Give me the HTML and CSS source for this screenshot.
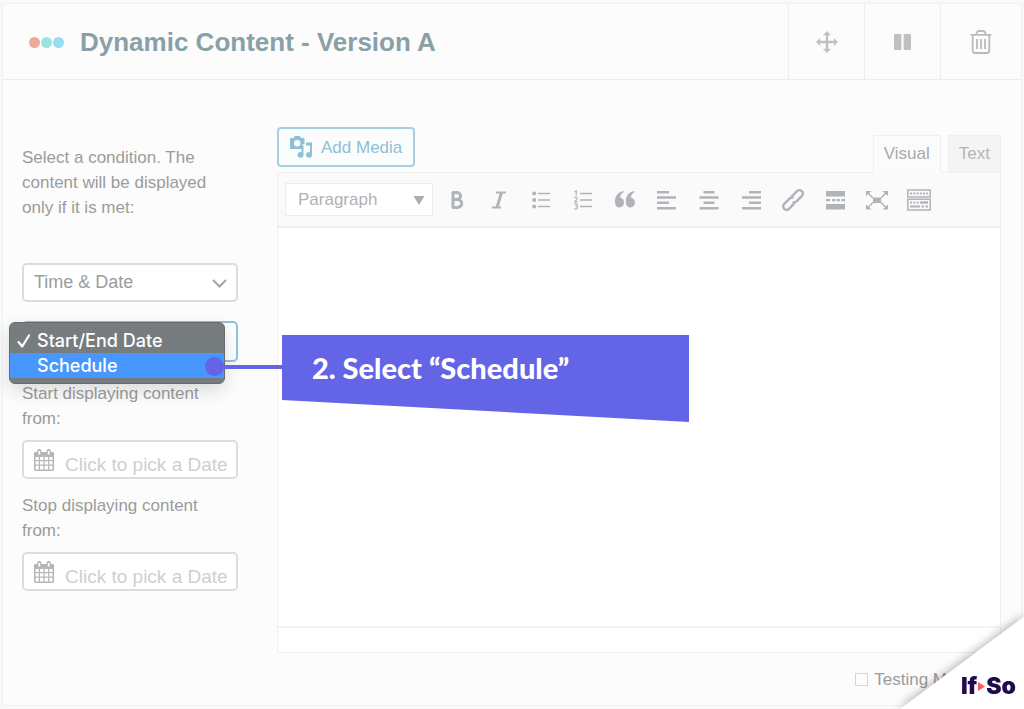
FILE: index.html
```html
<!DOCTYPE html>
<html lang="en">
<head>
<meta charset="utf-8">
<meta name="viewport" content="width=device-width, initial-scale=1">
<title>Dynamic Content - Version A</title>
<link rel="stylesheet" href="styles.css">
</head>
<body>
<main class="card">
  <header class="card-header">
    <span class="dots"><i class="dot dot-red"></i><i class="dot dot-teal"></i><i class="dot dot-blue"></i></span>
    <h1 class="title">Dynamic Content - Version A</h1>
    <div class="actions">
      <button class="action" type="button" aria-label="Move">
        <svg width="22" height="22" viewBox="0 0 22 22" fill="currentColor"><path d="M11 0l4 4.200h-2.800v5.600h5.600V7L22 11l-4.200 4v-2.800h-5.600v5.600H15L11 22l-4-4.200h2.800v-5.600H4.200V15L0 11l4.200-4v2.800h5.600V4.200H7z"/></svg>
      </button>
      <button class="action" type="button" aria-label="Pause">
        <svg width="17" height="16" viewBox="0 0 17 16" fill="currentColor"><rect width="7.400" height="16" rx="1"/><rect x="9.600" width="7.400" height="16" rx="1"/></svg>
      </button>
      <button class="action action-last" type="button" aria-label="Delete">
        <svg width="22" height="24" viewBox="0 0 22 24" fill="none" stroke="currentColor" stroke-width="1.800"><path d="M0.500 4.900h21M6.500 4.500c0-2.500 1-3.500 2.500-3.500h4c1.500 0 2.500 1 2.500 3.500M2.700 5v15.500c0 1.700.8 2.500 2.300 2.500h12c1.500 0 2.300-.8 2.300-2.500V5M7 9v10M11 9v10M15 9v10"/></svg>
      </button>
    </div>
  </header>

  <div class="card-body">
    <section class="conditions">
      <label class="text" for="condition">Select a condition. The content will be displayed only if it is met:</label>
      <div class="select-wrap condition-select">
        <select class="field" id="condition"><option>Time &amp; Date</option></select>
        <svg class="chevron" width="15" height="9" viewBox="0 0 15 9" fill="none" stroke="currentColor" stroke-width="2"><path d="M1 1l6.500 6.500L14 1"/></svg>
      </div>
      <div class="select-wrap type-select">
        <select class="field field-focus" aria-label="Time type"><option>Start/End Date</option></select>
        <div class="popup" role="listbox" aria-label="Time type options">
          <button class="option" type="button" role="option" aria-selected="true">
            <svg class="check" width="14" height="14" viewBox="0 0 14 14" fill="none" stroke="currentColor" stroke-width="2.200" stroke-linecap="round" stroke-linejoin="round"><path d="M1.500 8l3.700 4.500L12 1.500"/></svg>
            <span>Start/End Date</span>
          </button>
          <button class="option option-active" type="button" role="option" aria-selected="false">
            <span class="check"></span>
            <span>Schedule</span>
          </button>
        </div>
        <div class="annotation">
          <span class="pointer-dot"></span>
          <span class="pointer-line"></span>
          <p class="callout">2. Select “Schedule”</p>
        </div>
      </div>
      <label class="text" for="start">Start displaying content from:</label>
      <div class="date-field">
        <svg class="calendar" width="20" height="22" viewBox="0 0 20 22"><path fill="currentColor" fill-rule="evenodd" d="M1.500 3H3V2.300C3 1 3.800 0 5.300 0s2.300 1 2.300 2.300V3h4.800v-.7c0-1.300.8-2.300 2.300-2.300S17 1 17 2.300V3h1.500c.9 0 1.500.6 1.500 1.500v16c0 .9-.6 1.500-1.500 1.500h-17C.6 22 0 21.400 0 20.500v-16C0 3.600.6 3 1.500 3zM4.400 2v3.500h1.800V2zM13.800 2v3.500h1.800V2zM1.500 8v3h3.300V8zm4.500 0v3h3.500V8zm4.700 0v3h3.400V8zm4.600 0v3h3.200V8zM1.500 12.200v3.400h3.300v-3.400zm4.500 0v3.400h3.500v-3.400zm4.700 0v3.400h3.400v-3.400zm4.600 0v3.400h3.200v-3.400zM1.500 16.800v3.700h3.300v-3.700zm4.500 0v3.700h3.500v-3.700zm4.700 0v3.700h3.400v-3.700zm4.600 0v3.700h3.200v-3.700z"/></svg>
        <input class="date-input" id="start" type="text" placeholder="Click to pick a Date">
      </div>
      <label class="text text-stop" for="stop">Stop displaying content from:</label>
      <div class="date-field">
        <svg class="calendar" width="20" height="22" viewBox="0 0 20 22"><path fill="currentColor" fill-rule="evenodd" d="M1.500 3H3V2.300C3 1 3.800 0 5.300 0s2.300 1 2.300 2.300V3h4.800v-.7c0-1.300.8-2.300 2.300-2.300S17 1 17 2.300V3h1.500c.9 0 1.500.6 1.500 1.500v16c0 .9-.6 1.500-1.500 1.500h-17C.6 22 0 21.400 0 20.500v-16C0 3.600.6 3 1.500 3zM4.400 2v3.500h1.800V2zM13.800 2v3.500h1.800V2zM1.500 8v3h3.300V8zm4.500 0v3h3.500V8zm4.700 0v3h3.400V8zm4.600 0v3h3.200V8zM1.500 12.200v3.400h3.300v-3.400zm4.500 0v3.400h3.500v-3.400zm4.700 0v3.400h3.400v-3.400zm4.600 0v3.400h3.200v-3.400zM1.500 16.800v3.700h3.300v-3.700zm4.500 0v3.700h3.500v-3.700zm4.700 0v3.700h3.400v-3.700zm4.600 0v3.700h3.200v-3.700z"/></svg>
        <input class="date-input" id="stop" type="text" placeholder="Click to pick a Date">
      </div>
    </section>

    <section class="editor-column">
      <div class="editor-top">
        <button class="add-media" type="button">
          <svg width="22" height="22" viewBox="0 0 22 22" fill="currentColor"><path fill-rule="evenodd" d="M1 2h2.500L4.800 0h4.900L11 2h2.500c.6 0 1 .4 1 1v5.500H12V13H1c-.6 0-1-.4-1-1V3c0-.6.400-1 1-1zM7.200 4a3.200 3.200 0 100 6.400 3.200 3.200 0 000-6.400z"/><path d="M16 6.500h6V19a3 2.800 0 11-2-2.700V9.500h-4zM11.500 9.500h2V19a3 2.800 0 11-2-2.700z"/></svg>
          Add Media
        </button>
        <div class="tabs">
          <button class="tab tab-active" type="button">Visual</button>
          <button class="tab" type="button">Text</button>
        </div>
      </div>
      <div class="editor">
        <div class="toolbar">
          <div class="select-wrap format-wrap">
            <select class="format" aria-label="Format"><option>Paragraph</option></select>
            <svg class="caret" width="12" height="9" viewBox="0 0 12 9" fill="currentColor"><path d="M0.500 0h11L6 9z"/></svg>
          </div>
          <button class="tool" type="button" aria-label="Bold"><svg width="14" height="18" viewBox="0 0 14 18" fill="none" stroke="currentColor" stroke-width="3"><path d="M2.300 1.600h4.200c5.400 0 5.400 6.800 0 6.800H3h4.200c6 0 6 8 0 8H2.300M3 1v16"/></svg></button>
          <button class="tool" type="button" aria-label="Italic"><svg width="16" height="18" viewBox="0 0 16 18" fill="none" stroke="currentColor"><path stroke-width="2" d="M5 1.500h10M1 16.500h9"/><path stroke-width="3" d="M10.500 1.500L6 16.500"/></svg></button>
          <button class="tool" type="button" aria-label="Bulleted list"><svg width="18" height="18" viewBox="0 0 18 18" fill="currentColor"><circle cx="2.200" cy="2.500" r="2"/><circle cx="2.200" cy="9" r="2"/><circle cx="2.200" cy="15.500" r="2"/><path d="M6 1.700h12v1.600H6zM6 8.200h12v1.600H6zM6 14.700h12v1.600H6z"/></svg></button>
          <button class="tool" type="button" aria-label="Numbered list"><svg width="18" height="20" viewBox="0 0 18 20" fill="none" stroke="currentColor"><path stroke-width="1.600" d="M6 3.500h12M6 10h12M6 16.500h12"/><path stroke-width="1.200" d="M.5 2L2.200.800V5.500M.500 8c.5-1.300 3-1 2.700.5C3 9.700 1.500 10.700.7 11.900h3M.5 14.300c.8-.6 2.800-.6 2.800.6 0 .9-.9 1.300-1.800 1.300.9 0 2 .3 2 1.500 0 1.500-2 1.700-3.200.9"/></svg></button>
          <button class="tool" type="button" aria-label="Blockquote"><svg width="20" height="17" viewBox="0 0 20 17" fill="currentColor"><path d="M8.700 0v1.300C6 2.700 5.200 4.500 5.300 6.800c2.400.2 3.700 2.300 3.700 4.700A4.500 5 0 014.500 16.500C1.500 16.500 0 14 0 10.500 0 4.800 3 .8 8.700 0zM19.400 0v1.300C16.800 2.700 16 4.500 16.100 6.800c2.400.2 3.900 2.300 3.900 4.700a4.500 5 0 01-4.600 5c-3 0-4.600-2.500-4.600-6C10.800 4.800 13.700.8 19.400 0z"/></svg></button>
          <button class="tool" type="button" aria-label="Align left"><svg width="20" height="20" viewBox="0 0 20 20" fill="currentColor"><path d="M0 1h12v2.500H0zM0 6.300h19v2.500H0zM0 11.600h12v2.500H0zM0 16.900h19v2.500H0z"/></svg></button>
          <button class="tool" type="button" aria-label="Align center"><svg width="20" height="20" viewBox="0 0 20 20" fill="currentColor"><path d="M4.500 1h11v2.500h-11zM.5 6.300h19v2.500H.5zM4.500 11.600h11v2.500h-11zM.5 16.900h19v2.500H.5z"/></svg></button>
          <button class="tool" type="button" aria-label="Align right"><svg width="20" height="20" viewBox="0 0 20 20" fill="currentColor"><path d="M8 1h12v2.500H8zM1 6.300h19v2.500H1zM8 11.600h12v2.500H8zM1 16.900h19v2.500H1z"/></svg></button>
          <button class="tool" type="button" aria-label="Link"><svg width="22" height="22" viewBox="0 0 22 22" fill="none" stroke="currentColor"><g transform="rotate(-45 11 11)" stroke-width="2.500"><path d="M9.500 14.400H2a3.400 3.400 0 010-6.800h7.500c1.600 0 2.800 1 3.200 2.300M12.500 7.600H20a3.400 3.400 0 010 6.800h-7.500c-1.600 0-2.800-1-3.200-2.300"/></g></svg></button>
          <button class="tool" type="button" aria-label="Read more"><svg width="19" height="20" viewBox="0 0 19 20" fill="currentColor"><path d="M0 1h19v5.500H0zM0 9h4v2.200H0zM6 9h3.300v2.200H6zM10.500 9h3.300v2.200h-3.300zM15.300 9H19v2.200h-3.700zM0 14h19v5.500H0z"/></svg></button>
          <button class="tool" type="button" aria-label="Fullscreen"><svg width="22" height="20" viewBox="0 0 22 20" fill="currentColor"><path d="M7 7.500h8v5.500H7zM0 1h5.500L0 6zM22 1h-5.500L22 6zM0 19.500h5.500L0 14.500zM22 19.500h-5.500l5.500-5z"/><path fill="none" stroke="currentColor" stroke-width="1.500" d="M1 2l6 6M21 2l-6 6M1 18.500l6-6M21 18.500l-6-6"/></svg></button>
          <button class="tool" type="button" aria-label="Toolbar toggle"><svg width="24" height="22" viewBox="0 0 24 22" fill="none" stroke="currentColor"><path stroke-width="1.500" d="M.8 1h22.400v7H.8zM.8 10.300h22.400V21H.8z"/><path stroke-width="2" stroke-dasharray="2 1.300" d="M3 4.500h18M3 13.600h18"/><path stroke-width="2" d="M3 17.600h10M14.500 17.600h2.500M18.500 17.600H21M14 13.600h7"/></svg></button>
        </div>
        <textarea class="content" aria-label="Content"></textarea>
        <div class="statusbar"><svg width="10" height="10" viewBox="0 0 10 10" fill="#aaa"><path d="M7 1h1.500v1.500H7zM4 4h1.500v1.500H4zM7 4h1.500v1.500H7zM1 7h1.500v1.500H1zM4 7h1.500v1.500H4zM7 7h1.500v1.500H7z"/></svg></div>
      </div>
      <div class="testing">
        <input class="checkbox" type="checkbox" id="testing">
        <label for="testing">Testing M</label>
      </div>
    </section>
  </div>
</main>
<div class="corner">
  <svg class="corner-shape" width="150" height="125" viewBox="0 0 150 125"><path fill="#fff" d="M170 17.500L10 137h160z"/></svg>
  <div class="logo"><span>If</span><svg width="7" height="9" viewBox="0 0 7 9"><path fill="#fc5a5a" d="M0 0l7 4.500L0 9z"/></svg><span>So</span></div>
</div>
</body>
</html>
```
FILE: styles.css
```css
* { box-sizing: border-box; }

body {
  margin: 0;
  padding: 3px 2px;
  min-height: 100vh;
  display: flex;
  background: #f8f9f9;
  color: #9b9b9b;
  font: 17px/25px "Liberation Sans", Arial, sans-serif;
}

button, select, input, textarea {
  font: inherit;
  color: inherit;
  margin: 0;
}

svg { display: block; flex: none; }

.card {
  flex: 1;
  display: flex;
  flex-direction: column;
  min-width: 0;
  background: #fcfcfc;
  border: 1px solid #f1f1f1;
}

.card-header {
  display: flex;
  align-items: center;
  height: 76px;
  padding-left: 26px;
  border-bottom: 1px solid #ededed;
}

.dots { display: flex; gap: 1px; margin: 2px 16px 0 0; }
.dot { width: 11px; height: 11px; border-radius: 50%; }
.dot-red { background: #efa99c; }
.dot-teal { background: #9ae5df; }
.dot-blue { background: #9adcf2; }

.title {
  margin: 0;
  font-size: 26px;
  line-height: 32px;
  color: #8aa0a7;
}

.actions {
  display: flex;
  align-self: stretch;
  margin-left: auto;
}

.action {
  display: flex;
  align-items: center;
  justify-content: center;
  width: 76px;
  padding: 0;
  border: 0;
  border-left: 1px solid #eee;
  background: none;
  color: #c0c0c0;
}

.action-last { width: 81px; color: #bbb; }

.card-body {
  flex: 1;
  display: grid;
  grid-template-columns: 216px 1fr;
  gap: 39px;
  padding: 47px 20px 13px 19px;
}

.conditions {
  display: flex;
  flex-direction: column;
  padding-top: 18px;
}

.select-wrap {
  position: relative;
  display: flex;
}

.condition-select { margin: 43px 0 19px; }
.type-select { margin-bottom: 19px; }

.field {
  flex: 1;
  appearance: none;
  height: 39px;
  padding: 0 10px;
  border: 2px solid #d8dde1;
  border-radius: 5px;
  background: #fff;
  font-size: 18px;
  color: #999da0;
}

.field-focus {
  height: 41px;
  border-color: #8fc3dd;
  color: transparent;
}

.chevron {
  position: absolute;
  right: 11px;
  top: 16px;
  color: #a3a6a8;
  pointer-events: none;
}

.popup {
  position: absolute;
  z-index: 1;
  top: 1px;
  left: -13px;
  width: 216px;
  padding: 5px 0;
  border: 1px solid #686c6e;
  border-radius: 6px;
  background: #777c7e;
  box-shadow: 0 6px 18px rgba(0, 0, 0, .14);
}

.option {
  display: flex;
  align-items: center;
  gap: 6px;
  width: 100%;
  height: 25px;
  padding: 0 7px;
  border: 0;
  background: none;
  color: #fff;
  font: 500 18px/25px Inter, sans-serif;
}

.option-active { background: #4897ff; }
.check { width: 14px; }

.annotation {
  position: absolute;
  z-index: 2;
  top: 14px;
  left: 183px;
  display: flex;
  align-items: flex-start;
  color: #6464e6;
}

.pointer-dot {
  width: 19px;
  height: 19px;
  margin-top: 22px;
  border-radius: 50%;
  background: currentColor;
}

.pointer-line {
  width: 59px;
  height: 4px;
  margin: 30px 0 0 -1px;
  background: currentColor;
}

.callout {
  width: 407px;
  height: 87px;
  margin: 0;
  padding: 17px 30px;
  background: #6464e6;
  clip-path: polygon(0 0, 100% 0, 100% 100%, 0 65px);
  color: #fff;
  font: 900 29px/32px Lato, sans-serif;
  white-space: nowrap;
}

.date-field {
  display: flex;
  align-items: center;
  gap: 11px;
  height: 39px;
  margin-top: 9px;
  padding-left: 10px;
  border: 2px solid #d8dde1;
  border-radius: 5px;
  background: #fff;
}

.calendar { color: #b4b7ba; }

.date-input {
  flex: 1;
  min-width: 0;
  height: 35px;
  padding: 10px 0 0;
  border: 0;
  background: none;
  font-size: 19px;
}

.date-input::placeholder { color: #cfcfcf; opacity: 1; }
.text-stop { margin-top: 14px; }

.editor-column {
  display: flex;
  flex-direction: column;
  min-width: 0;
}

.editor-top {
  display: flex;
  justify-content: space-between;
  height: 45px;
}

.add-media {
  display: flex;
  align-items: center;
  gap: 9px;
  height: 40px;
  padding: 0 11px;
  border: 2px solid #a5cfe2;
  border-radius: 4px;
  background: #fbfcfc;
  color: #8fc0d8;
}

.tabs {
  display: flex;
  align-items: flex-end;
  gap: 7px;
}

.tab {
  height: 37px;
  padding: 0 10px 2px;
  border: 1px solid #efefef;
  border-bottom: 0;
  background: #f4f4f4;
  color: #b5b5b5;
}

.tab-active {
  position: relative;
  height: 38px;
  margin-bottom: -1px;
  background: #fbfbfb;
  color: #aaa;
}

.editor {
  flex: 1;
  display: flex;
  flex-direction: column;
  border: 1px solid #f0f0f0;
  background: #fff;
}

.toolbar {
  display: flex;
  align-items: center;
  height: 55px;
  padding-left: 7px;
  border-bottom: 2px solid #eee;
  background: #fafafa;
}

.format-wrap { width: 148px; margin-right: 3px; }

.format {
  flex: 1;
  appearance: none;
  height: 33px;
  padding: 0 12px;
  border: 1px solid #ececec;
  border-radius: 0;
  background: #fff;
  color: #b2b2b2;
}

.caret {
  position: absolute;
  right: 8px;
  top: 13px;
  color: #abafb3;
  pointer-events: none;
}

.tool {
  display: flex;
  align-items: center;
  justify-content: center;
  width: 42px;
  height: 34px;
  padding: 0;
  border: 0;
  background: none;
  color: #b0b4b8;
}

.content {
  flex: 1;
  min-height: 200px;
  padding: 12px;
  border: 0;
  resize: none;
  background: #fff;
}

.statusbar {
  display: flex;
  justify-content: flex-end;
  height: 26px;
  padding: 7px 0 0;
  border-top: 2px solid #f3f3f3;
}

.testing {
  display: flex;
  align-items: center;
  justify-content: flex-end;
  gap: 6px;
  margin-top: 14px;
  padding-right: 54px;
}

.checkbox {
  appearance: none;
  width: 13px;
  height: 13px;
  border: 1px solid #d5d5d5;
  background: #fcfcfc;
}

.corner {
  position: fixed;
  z-index: 3;
  right: 0;
  bottom: 0;
  pointer-events: none;
}

.corner-shape { filter: drop-shadow(-1px -1px 5px rgba(0, 0, 0, .3)); }

.logo {
  position: absolute;
  right: 8px;
  bottom: 10px;
  display: flex;
  align-items: center;
  gap: 1px;
  color: #1f0a4d;
  font: 900 23px/26px Inter, sans-serif;
}
```
